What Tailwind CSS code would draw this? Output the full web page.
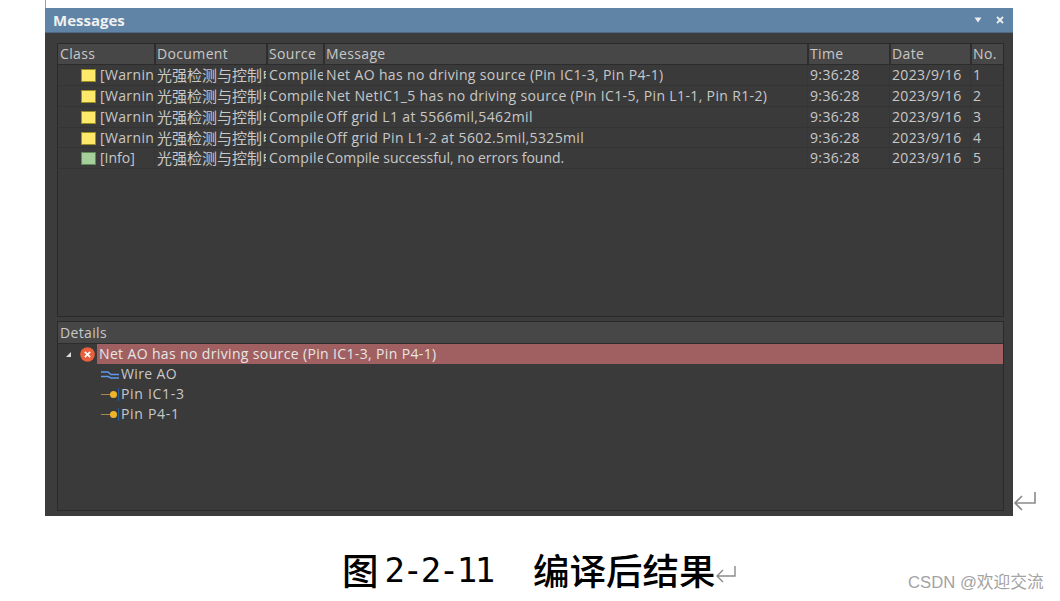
<!DOCTYPE html>
<html lang="en">
<head>
    <meta charset="UTF-8">
    <title>Messages</title>
    <script src="https://cdn.jsdelivr.net/npm/@tailwindcss/browser@4"></script>
</head>
<body class="bg-white">
<div class="relative w-[1060px] h-[601px] overflow-hidden font-['Open_Sans','Noto_Sans_CJK_SC',sans-serif]">
    <!-- thin line above the window -->
    <div class="absolute left-[45px] top-0 w-px h-2 bg-gray-400"></div>

    <div class="flex items-end pl-[45px] pt-2">
        <div class="w-[968px] h-[508px] flex flex-col bg-[#3c3c3c] text-[14px] tracking-[0.36px] text-[#c8c8c8] leading-5">
            <!-- title bar -->
            <div class="h-[25px] shrink-0 flex items-center justify-between pl-2 pr-[9px] bg-[#5f84a6] border-b border-[#4d6a85]">
                <span class="text-[15px] tracking-normal font-bold text-[#f0f0f0]">Messages</span>
                <div class="flex items-center gap-[14px]">
                    <svg width="8" height="6" viewBox="0 0 8 6"><path d="M0.5 0.5H7.5L4 5.5Z" fill="#eee"/></svg>
                    <svg width="8" height="8" viewBox="0 0 8 8"><path d="M1 1L7 7M7 1L1 7" stroke="#eee" stroke-width="1.8"/></svg>
                </div>
            </div>

            <!-- messages table -->
            <div class="ml-3 mr-[9px] mt-[10px] h-[274px] shrink-0 border border-[#2a2a2a] bg-[#3a3a3a]">
                <div class="h-[21px] grid grid-cols-[96px_112px_57px_484px_82px_81px_1fr] bg-[#474747] border-b border-[#2c2c2c]">
                    <div class="pl-[2px]">Class</div>
                    <div class="pl-[1px] border-l-2 border-[#2e2e2e]">Document</div>
                    <div class="pl-[1px] border-l-2 border-[#2e2e2e]">Source</div>
                    <div class="pl-[1px] border-l-2 border-[#2e2e2e]">Message</div>
                    <div class="pl-[1px] border-l-2 border-[#2e2e2e]">Time</div>
                    <div class="pl-[1px] border-l-2 border-[#2e2e2e]">Date</div>
                    <div class="pl-[1px] border-l-2 border-[#2e2e2e]">No.</div>
                </div>

                <div class="h-[21px] grid grid-cols-[96px_112px_57px_484px_82px_81px_1fr] border-b border-[#343434]">
                    <div class="pl-[23px] flex items-center gap-1 overflow-hidden whitespace-nowrap"><span class="w-[15px] h-[13px] shrink-0 bg-[#ffe96b] border border-[#9c9020]"></span>[Warning]</div>
                    <div class="pl-[2px] border-l border-[#363636] overflow-hidden whitespace-nowrap text-[15px] tracking-normal">光强检测与控制电路</div>
                    <div class="pl-[2px] border-l border-[#363636] overflow-hidden whitespace-nowrap">Compiler</div>
                    <div class="pl-[2px] border-l border-[#363636] whitespace-nowrap">Net AO has no driving source (Pin IC1-3, Pin P4-1)</div>
                    <div class="pl-[2px] border-l border-[#363636]">9:36:28</div>
                    <div class="pl-[2px] border-l border-[#363636]">2023/9/16</div>
                    <div class="pl-[2px] border-l border-[#363636]">1</div>
                </div>
                <div class="h-[21px] grid grid-cols-[96px_112px_57px_484px_82px_81px_1fr] border-b border-[#343434]">
                    <div class="pl-[23px] flex items-center gap-1 overflow-hidden whitespace-nowrap"><span class="w-[15px] h-[13px] shrink-0 bg-[#ffe96b] border border-[#9c9020]"></span>[Warning]</div>
                    <div class="pl-[2px] border-l border-[#363636] overflow-hidden whitespace-nowrap text-[15px] tracking-normal">光强检测与控制电路</div>
                    <div class="pl-[2px] border-l border-[#363636] overflow-hidden whitespace-nowrap">Compiler</div>
                    <div class="pl-[2px] border-l border-[#363636] whitespace-nowrap">Net NetIC1_5 has no driving source (Pin IC1-5, Pin L1-1, Pin R1-2)</div>
                    <div class="pl-[2px] border-l border-[#363636]">9:36:28</div>
                    <div class="pl-[2px] border-l border-[#363636]">2023/9/16</div>
                    <div class="pl-[2px] border-l border-[#363636]">2</div>
                </div>
                <div class="h-[21px] grid grid-cols-[96px_112px_57px_484px_82px_81px_1fr] border-b border-[#343434]">
                    <div class="pl-[23px] flex items-center gap-1 overflow-hidden whitespace-nowrap"><span class="w-[15px] h-[13px] shrink-0 bg-[#ffe96b] border border-[#9c9020]"></span>[Warning]</div>
                    <div class="pl-[2px] border-l border-[#363636] overflow-hidden whitespace-nowrap text-[15px] tracking-normal">光强检测与控制电路</div>
                    <div class="pl-[2px] border-l border-[#363636] overflow-hidden whitespace-nowrap">Compiler</div>
                    <div class="pl-[2px] border-l border-[#363636] whitespace-nowrap">Off grid L1 at 5566mil,5462mil</div>
                    <div class="pl-[2px] border-l border-[#363636]">9:36:28</div>
                    <div class="pl-[2px] border-l border-[#363636]">2023/9/16</div>
                    <div class="pl-[2px] border-l border-[#363636]">3</div>
                </div>
                <div class="h-5 grid grid-cols-[96px_112px_57px_484px_82px_81px_1fr] border-b border-[#343434]">
                    <div class="pl-[23px] flex items-center gap-1 overflow-hidden whitespace-nowrap"><span class="w-[15px] h-[13px] shrink-0 bg-[#ffe96b] border border-[#9c9020]"></span>[Warning]</div>
                    <div class="pl-[2px] border-l border-[#363636] overflow-hidden whitespace-nowrap text-[15px] tracking-normal">光强检测与控制电路</div>
                    <div class="pl-[2px] border-l border-[#363636] overflow-hidden whitespace-nowrap">Compiler</div>
                    <div class="pl-[2px] border-l border-[#363636] whitespace-nowrap">Off grid Pin L1-2 at 5602.5mil,5325mil</div>
                    <div class="pl-[2px] border-l border-[#363636]">9:36:28</div>
                    <div class="pl-[2px] border-l border-[#363636]">2023/9/16</div>
                    <div class="pl-[2px] border-l border-[#363636]">4</div>
                </div>
                <div class="h-[21px] grid grid-cols-[96px_112px_57px_484px_82px_81px_1fr] border-b border-[#343434]">
                    <div class="pl-[23px] flex items-center gap-1 overflow-hidden whitespace-nowrap"><span class="w-[15px] h-[13px] shrink-0 bg-[#a5d09c] border border-[#5f8a5a]"></span><span class="tracking-normal">[Info]</span></div>
                    <div class="pl-[2px] border-l border-[#363636] overflow-hidden whitespace-nowrap text-[15px] tracking-normal">光强检测与控制电路</div>
                    <div class="pl-[2px] border-l border-[#363636] overflow-hidden whitespace-nowrap">Compiler</div>
                    <div class="pl-[2px] border-l border-[#363636] whitespace-nowrap tracking-normal">Compile successful, no errors found.</div>
                    <div class="pl-[2px] border-l border-[#363636]">9:36:28</div>
                    <div class="pl-[2px] border-l border-[#363636]">2023/9/16</div>
                    <div class="pl-[2px] border-l border-[#363636]">5</div>
                </div>
            </div>

            <!-- details panel -->
            <div class="ml-3 mr-[9px] mt-[4px] h-[190px] shrink-0 border border-[#2a2a2a] bg-[#3a3a3a]">
                <div class="h-[22px] pt-[1px] pl-[2px] bg-[#474747] border-b border-[#2c2c2c]">Details</div>
                <div class="h-5 flex items-center">
                    <svg class="ml-2 w-[5px] h-[5px]" viewBox="0 0 5 5"><path d="M5 0V5H0Z" fill="#ddd"/></svg>
                    <svg class="ml-[9px] w-[15px] h-[15px]" viewBox="0 0 14 14"><circle cx="7" cy="7" r="6.8" fill="#e8603c"/><path d="M4.5 4.5L9.5 9.5M9.5 4.5L4.5 9.5" stroke="#fff" stroke-width="1.6"/></svg>
                    <div class="ml-[2px] flex-1 h-5 pl-[2px] bg-[#a05f60] text-[#e6e6e6] whitespace-nowrap">Net AO has no driving source (Pin IC1-3, Pin P4-1)</div>
                </div>
                <div class="h-5 flex items-center pl-[43px] gap-[2px]">
                    <svg width="18" height="9" viewBox="0 0 18 9" fill="none" stroke="#5f9bea" stroke-width="1.4"><path d="M0 2H7L10 4.5H18M0 6.5H7L10 8H18"/></svg>
                    <span>Wire AO</span>
                </div>
                <div class="h-5 flex items-center pl-[43px] gap-[2px]">
                    <svg width="18" height="13" viewBox="0 0 18 13"><path d="M0 6.5H10" stroke="#a08a50"/><circle cx="12.5" cy="6.5" r="3.5" fill="#f0b429"/><path d="M17.5 0V13" stroke="#2a5a90"/></svg>
                    <span class="tracking-[0.7px]">Pin IC1-3</span>
                </div>
                <div class="h-5 flex items-center pl-[43px] gap-[2px]">
                    <svg width="18" height="13" viewBox="0 0 18 13"><path d="M0 6.5H10" stroke="#a08a50"/><circle cx="12.5" cy="6.5" r="3.5" fill="#f0b429"/><path d="M17.5 0V13" stroke="#2a5a90"/></svg>
                    <span class="tracking-[0.7px]">Pin P4-1</span>
                </div>
            </div>
        </div>
        <svg class="mb-[4px]" width="24" height="22" viewBox="0 0 24 22" fill="none" stroke="#8a8a8a" stroke-width="1.6"><path d="M22 2V13H2M9 6L2 13L9 20"/></svg>
    </div>

    <!-- caption -->
    <div class="flex items-center h-[40px] mt-[34px] pl-[342px] text-black text-[36.5px] leading-none font-medium font-['Noto_Sans_CJK_SC',sans-serif]">
        <span>图</span>
        <span class="ml-[6px] font-['DejaVu_Sans_Mono',monospace] font-normal text-[34px] tracking-[-2.4px]">2-2-11</span>
        <span class="ml-10">编译后结果</span>
        <svg class="mt-2" width="22" height="20" viewBox="0 0 22 20" fill="none" stroke="#8a8a8a" stroke-width="1.4"><path d="M20 2V12H2M8 6L2 12L8 18"/></svg>
    </div>

    <!-- watermark -->
    <div class="absolute left-[908px] top-[573px] text-[16.7px] leading-5 text-[#a3a3a3] font-['Liberation_Sans','Noto_Sans_CJK_SC',sans-serif]">CSDN @欢迎交流</div>
</div>
</body>
</html>
